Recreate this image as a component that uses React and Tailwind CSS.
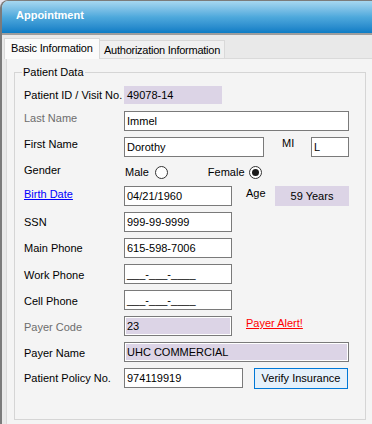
import React from 'react';

const Field = ({ className = '', children }) => (
  <div className={`h-[20px] shrink-0 border border-[#7a7a7a] bg-white pl-[2px] leading-[18px] whitespace-nowrap overflow-hidden ${className}`}>
    {children}
  </div>
);

const LockedField = ({ className = '', children }) => (
  <div className={`h-[20px] shrink-0 border border-[#7a7a7a] bg-[#dcd4e6] shadow-[inset_0_0_0_1px_#ffffff] pl-[2px] leading-[18px] whitespace-nowrap overflow-hidden ${className}`}>
    {children}
  </div>
);

const Row = ({ h, labelTop, labelClass = '', label, children }) => (
  <div className={`flex items-start ${h}`}>
    <div className={`w-[100px] shrink-0 whitespace-nowrap ${labelTop} ${labelClass}`}>{label}</div>
    {children}
  </div>
);

const Radio = ({ checked, className = '' }) => (
  <span className={`flex h-[13px] w-[13px] shrink-0 items-center justify-center rounded-full border border-[#333333] bg-white ${className}`}>
    {checked && <span className="h-[7px] w-[7px] rounded-full bg-[#1a1a1a]" />}
  </span>
);

const mask = '___-___-____';

export default function App() {
  return (
    <div className="w-[372px] h-[424px] overflow-hidden bg-[#e6e4ee] font-['Liberation_Sans',Arial,sans-serif] text-[11px] leading-[13px] text-black">
      <div className="flex h-full flex-col overflow-hidden rounded-tl-[8px] border-t border-l-2 border-[#7b7b7b] bg-[#e9e9e9]">
        {/* title bar */}
        <div className="h-[32px] shrink-0 bg-gradient-to-b from-[#a6d7f0] via-[#4ea9dc] to-[#0a7cc5] pl-[14px] pt-[8px] font-bold text-white">
          Appointment
        </div>
        <div className="h-[2px] shrink-0 bg-[#9d9d9d]" />

        {/* tabs */}
        <div className="flex h-[23px] shrink-0 items-end pl-[2px]">
          <div className="relative z-10 mb-[-1px] h-[21px] w-[96px] shrink-0 whitespace-nowrap border border-b-0 border-[#d9d9d9] bg-[#fbfbfb] pl-[6px] pt-[3px] tracking-[-0.2px]">
            Basic Information
          </div>
          <div className="h-[18px] w-[125px] shrink-0 overflow-hidden whitespace-nowrap border-t border-r border-[#d9d9d9] bg-[#f0f0f0] pl-[4px] pt-[3px] tracking-[-0.25px]">
            Authorization Information
          </div>
        </div>

        {/* tab page */}
        <div className="ml-[4px] flex-1 border-t border-l border-[#dadada] bg-[#f4f4f4] pt-[7px]">
          <fieldset className="ml-[7px] h-[354px] w-[352px] border border-[#d5d5d5] px-[9px] pt-[7px]">
            <legend className="ml-[-2px] px-[1px] leading-[13px]">Patient Data</legend>

            <Row h="h-[25px]" labelTop="mt-[3px]" label="Patient ID / Visit No.">
              <div className="h-[18px] w-[98px] bg-[#dcd4e6] pl-[3px] leading-[18px]">49078-14</div>
            </Row>

            <Row h="h-[26px]" labelTop="mt-[1px]" labelClass="text-[#6d6d6d]" label="Last Name">
              <Field className="w-[225px]">Immel</Field>
            </Row>

            <Row h="h-[26px]" labelTop="mt-[1px]" label="First Name">
              <Field className="w-[140px]">Dorothy</Field>
              <div className="ml-[18px] w-[29px] shrink-0">MI</div>
              <Field className="w-[38px]">L</Field>
            </Row>

            <Row h="h-[23px]" labelTop="mt-[1px]" label="Gender">
              <span className="ml-[1px] mt-[3px]">Male</span>
              <Radio className="ml-[6px] mt-[3px]" />
              <span className="ml-[40px] mt-[3px]">Female</span>
              <Radio checked className="ml-[4px] mt-[3px]" />
            </Row>

            <Row h="h-[26px]" labelTop="mt-[2px]" labelClass="text-[#0000ff] underline" label="Birth Date">
              <Field className="w-[108px]">04/21/1960</Field>
              <div className="ml-[14px] mt-[1px] w-[29px] shrink-0">Age</div>
              <div className="h-[20px] w-[74px] bg-[#dcd4e6] text-center leading-[21px]">59 Years</div>
            </Row>

            <Row h="h-[26px]" labelTop="mt-[4px]" label="SSN">
              <Field className="w-[108px]">999-99-9999</Field>
            </Row>

            <Row h="h-[26px]" labelTop="mt-[4px]" label="Main Phone">
              <Field className="w-[108px]">615-598-7006</Field>
            </Row>

            <Row h="h-[26px]" labelTop="mt-[5px]" label="Work Phone">
              <Field className="w-[108px]">{mask}</Field>
            </Row>

            <Row h="h-[26px]" labelTop="mt-[5px]" label="Cell Phone">
              <Field className="w-[108px]">{mask}</Field>
            </Row>

            <Row h="h-[26px]" labelTop="mt-[5px]" labelClass="text-[#6d6d6d]" label="Payer Code">
              <LockedField className="w-[108px]">23</LockedField>
              <span className="ml-[14px] mt-[1px] text-[#ff0000] underline">Payer Alert!</span>
            </Row>

            <Row h="h-[26px]" labelTop="mt-[5px]" label="Payer Name">
              <LockedField className="w-[225px]">UHC COMMERCIAL</LockedField>
            </Row>

            <Row h="h-[21px]" labelTop="mt-[4px]" label="Patient Policy No.">
              <Field className="w-[119px]">974119919</Field>
              <button className="ml-[11px] h-[21px] w-[94px] border border-[#0078d7] bg-[#e5f1fb] text-center leading-[19px]">
                Verify Insurance
              </button>
            </Row>
          </fieldset>
        </div>
      </div>
    </div>
  );
}
